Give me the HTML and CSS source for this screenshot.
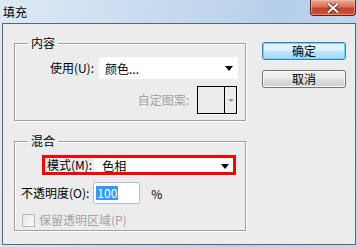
FILE: index.html
```html
<!DOCTYPE html>
<html lang="zh">
<head>
    <meta charset="UTF-8">
    <meta name="viewport" content="width=device-width, initial-scale=1.0">
    <title>填充</title>
    <link rel="stylesheet" href="styles.css">
</head>
<body>

    <div class="window">
        <!-- 标题栏 -->
        <div class="titlebar">
            <span class="title">填充</span>
            <button class="close-btn">
                <svg width="12" height="10" viewBox="0 0 12 10">
                    <path d="M1.5 1 L10.5 9 M10.5 1 L1.5 9" stroke="#4a2a24" stroke-width="3.6" stroke-linecap="square"/>
                    <path d="M1.5 1 L10.5 9 M10.5 1 L1.5 9" stroke="#ffffff" stroke-width="2" stroke-linecap="square"/>
                </svg>
            </button>
        </div>

        <!-- 内容区 -->
        <div class="client">
            <div class="groups">
                <fieldset class="group group-content">
                    <legend>内容</legend>
                    <div class="row">
                        <span class="label">使用(U):</span>
                        <div class="select use-select">
                            <span>颜色...</span>
                            <i class="arrow"></i>
                        </div>
                    </div>
                    <div class="row pattern-row">
                        <span class="label disabled">自定图案:</span>
                        <div class="pattern-box">
                            <div class="swatch"></div>
                            <div class="pattern-drop"><i class="arrow grey"></i></div>
                        </div>
                    </div>
                </fieldset>

                <fieldset class="group group-blend">
                    <legend>混合</legend>
                    <div class="mode-row">
                        <span class="label">模式(M):</span>
                        <div class="select mode-select">
                            <span>色相</span>
                            <i class="arrow"></i>
                        </div>
                    </div>
                    <div class="opacity-row">
                        <span class="label">不透明度(O):</span>
                        <div class="text-input"><span class="selected">100</span></div>
                        <span class="pct">%</span>
                    </div>
                    <div class="check-row disabled">
                        <span class="checkbox"></span>
                        <span>保留透明区域(P)</span>
                    </div>
                </fieldset>
            </div>

            <div class="buttons">
                <button class="btn btn-default">确定</button>
                <button class="btn">取消</button>
            </div>
        </div>
    </div>

</body>
</html>
```

FILE: styles.css
```css
* {
    margin: 0;
    padding: 0;
    box-sizing: border-box;
}

body {
    width: 358px;
    height: 247px;
    overflow: hidden;
    font-family: "Noto Sans CJK SC", "Noto Sans", sans-serif;
    font-size: 12px;
    color: #000;
}

/* 窗口外框 */
.window {
    width: 358px;
    height: 247px;
    padding: 0 2px 2px 2px;
    background: linear-gradient(100deg, #dde9f6 0%, #c4d9ee 45%, #b6cfea 70%, #c2d8ee 100%);
    display: flex;
    flex-direction: column;
}

/* 标题栏 */
.titlebar {
    height: 23px;
    display: flex;
    justify-content: space-between;
    align-items: flex-start;
    padding-left: 1px;
    padding-right: 1px;
}

.title {
    line-height: 14px;
    margin-top: 5px;
}

.close-btn {
    width: 46px;
    height: 16px;
    margin-right: -1px;
    border: 1px solid #5e2117;
    border-top: none;
    border-radius: 0 0 4px 4px;
    background: linear-gradient(#e9a996 0%, #d8705a 45%, #c4402a 55%, #d0533a 100%);
    box-shadow: inset 0 0 0 1px rgba(255, 200, 180, 0.5);
    display: flex;
    align-items: center;
    justify-content: center;
}

/* 客户区 */
.client {
    flex: 1;
    background: #ececec;
    border: 1px solid #5b6670;
    display: flex;
    align-items: flex-start;
    padding: 12px 0 0 11px;
}

.groups {
    width: 232px;
    display: flex;
    flex-direction: column;
}

.group {
    border: 1px solid #a0a0a0;
    box-shadow: 1px 1px 0 #fff, inset 1px 1px 0 #fff;
    margin: 0;
    padding: 0;
}

.group legend {
    margin-left: 13px;
    padding: 0 3px;
    line-height: 14px;
}

.group-content {
    height: 85px;
    padding: 0 7px 0 0;
}

.group-blend {
    margin-top: 13px;
    height: 97px;
}

.row {
    display: flex;
    justify-content: flex-end;
    align-items: center;
}

.group-content .row:first-of-type {
    margin-top: 7px;
}

.label {
    line-height: 14px;
    white-space: nowrap;
}

.disabled,
.disabled .label {
    color: #a3a3a3;
}

/* 下拉框 */
.select {
    background: #fff;
    display: flex;
    align-items: center;
    justify-content: space-between;
    padding: 0 5px 0 6px;
}

.use-select {
    width: 139px;
    height: 22px;
    margin-left: 5px;
    border-radius: 2px;
}

.arrow {
    width: 0;
    height: 0;
    border-left: 4px solid transparent;
    border-right: 4px solid transparent;
    border-top: 5px solid #000;
    margin-top: 1px;
}

.arrow.grey {
    border-left-width: 3px;
    border-right-width: 3px;
    border-top: 3px solid #9a9a9a;
}

.pattern-row {
    margin-top: 7px;
}

.pattern-box {
    width: 40px;
    height: 28px;
    border: 1px solid #000;
    box-shadow: 1px 1px 0 #fff;
    display: flex;
    margin-left: 8px;
    margin-right: 1px;
}

.swatch {
    flex: 1;
    border-right: 1px solid #000;
}

.pattern-drop {
    width: 11px;
    display: flex;
    align-items: center;
    justify-content: center;
}

/* 混合 */
.mode-row {
    margin: 7px 0 0 27px;
    width: 194px;
    height: 20px;
    border: 3px solid #ff0000;
    display: flex;
    align-items: center;
    padding-left: 2px;
}

.mode-select {
    flex: 1;
    height: 100%;
    margin-left: 2px;
    padding: 0 4px 0 8px;
}

.mode-select .arrow {
    margin-top: 2px;
}

.opacity-row {
    display: flex;
    align-items: center;
    margin: 7px 0 0 6px;
}

.text-input {
    width: 47px;
    height: 22px;
    margin-left: 4px;
    background: #fff;
    border: 1px solid #a9bfd6;
    border-radius: 2px;
    display: flex;
    align-items: center;
    padding-left: 2px;
}

.selected {
    background: #3399ff;
    color: #fff;
    line-height: 14px;
    padding: 0 1px;
}

.pct {
    margin-left: 11px;
}

.check-row {
    display: flex;
    align-items: center;
    margin: 9px 0 0 7px;
    line-height: 14px;
}

.checkbox {
    width: 13px;
    height: 13px;
    border: 1px solid #b8b8b8;
    background: linear-gradient(135deg, #e6e6e6, #fafafa);
    margin-right: 4px;
}

/* 按钮 */
.buttons {
    display: flex;
    flex-direction: column;
    gap: 10px;
    margin-left: 16px;
    margin-top: 6px;
}

.btn {
    width: 84px;
    height: 18px;
    font-family: inherit;
    font-size: 12px;
    line-height: 14px;
    color: #000;
    border: 1px solid #707070;
    border-radius: 3px;
    background: linear-gradient(#f2f2f2 0%, #ebebeb 48%, #dddddd 52%, #cfcfcf 100%);
    box-shadow: inset 0 0 0 1px #fcfcfc;
}

.btn-default {
    border-color: #3c7fb1;
    background: linear-gradient(#eaf6fd 0%, #d9f0fc 48%, #bee6fd 52%, #a7d9f5 100%);
    box-shadow: inset 0 0 0 1px #6fd3fb;
}
```
